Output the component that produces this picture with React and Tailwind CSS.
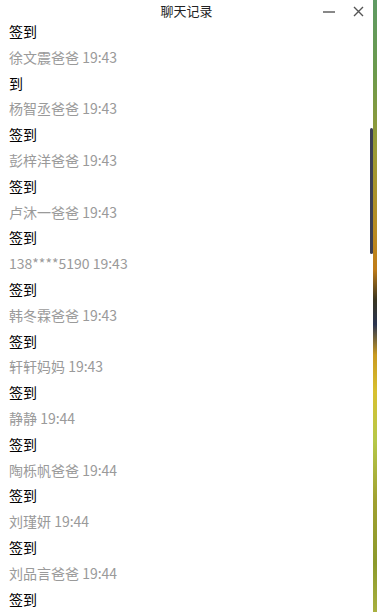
import React from "react";

const records = [
  { text: "签到", name: "徐文震爸爸 19:43" },
  { text: "到", name: "杨智丞爸爸 19:43" },
  { text: "签到", name: "彭梓洋爸爸 19:43" },
  { text: "签到", name: "卢沐一爸爸 19:43" },
  { text: "签到", name: "138****5190 19:43" },
  { text: "签到", name: "韩冬霖爸爸 19:43" },
  { text: "签到", name: "轩轩妈妈 19:43" },
  { text: "签到", name: "静静 19:44" },
  { text: "签到", name: "陶栎帆爸爸 19:44" },
  { text: "签到", name: "刘瑾妍 19:44" },
  { text: "签到", name: "刘品言爸爸 19:44" },
];

const font = { fontFamily: '"Noto Sans CJK SC", "Liberation Sans", sans-serif' };

export default function App() {
  return (
    <div className="flex h-[612px] w-[377px] overflow-hidden" style={font}>
      {/* chat window */}
      <div className="relative flex w-[373px] flex-col bg-white">
        {/* title bar */}
        <div className="relative flex h-[26px] items-center justify-center">
          <span className="mt-[1px] text-[13px] leading-none text-[#222]">聊天记录</span>
          <div className="absolute right-[9px] top-[6px] flex items-center gap-[18px]">
            <div className="h-[2px] w-[12px] bg-[#888]" />
            <svg width="11" height="11" viewBox="0 0 11 11" className="text-[#555]">
              <path d="M1 1 L10 10 M10 1 L1 10" stroke="currentColor" strokeWidth="1.4" />
            </svg>
          </div>
        </div>

        {/* messages */}
        <div className="-mt-[2px] flex flex-col px-[9px]">
          {records.map((r, i) => (
            <div key={i} className="flex flex-col">
              <div className="flex h-[25.8px] items-center text-[14px] text-black">{r.text}</div>
              <div className="flex h-[25.8px] items-center text-[14px] text-[#9a9a9a]">{r.name}</div>
            </div>
          ))}
          <div className="flex h-[25.8px] items-center text-[14px] text-black">签到</div>
        </div>

        {/* scrollbar thumb */}
        <div className="absolute right-0 top-[128px] h-[126px] w-[3px] rounded-full bg-[#3d4055]" />
      </div>

      {/* desktop wallpaper strip */}
      <div className="flex-1 bg-[linear-gradient(180deg,#5f9a64_0%,#6c9a4c_12%,#9b9a34_25%,#b88a22_38%,#c07c18_44%,#3a3520_49%,#2a3450_53%,#c99a20_58%,#d8c030_64%,#b6c84a_72%,#a0a030_82%,#8c9a2c_92%,#a8b040_100%)]" />
    </div>
  );
}
